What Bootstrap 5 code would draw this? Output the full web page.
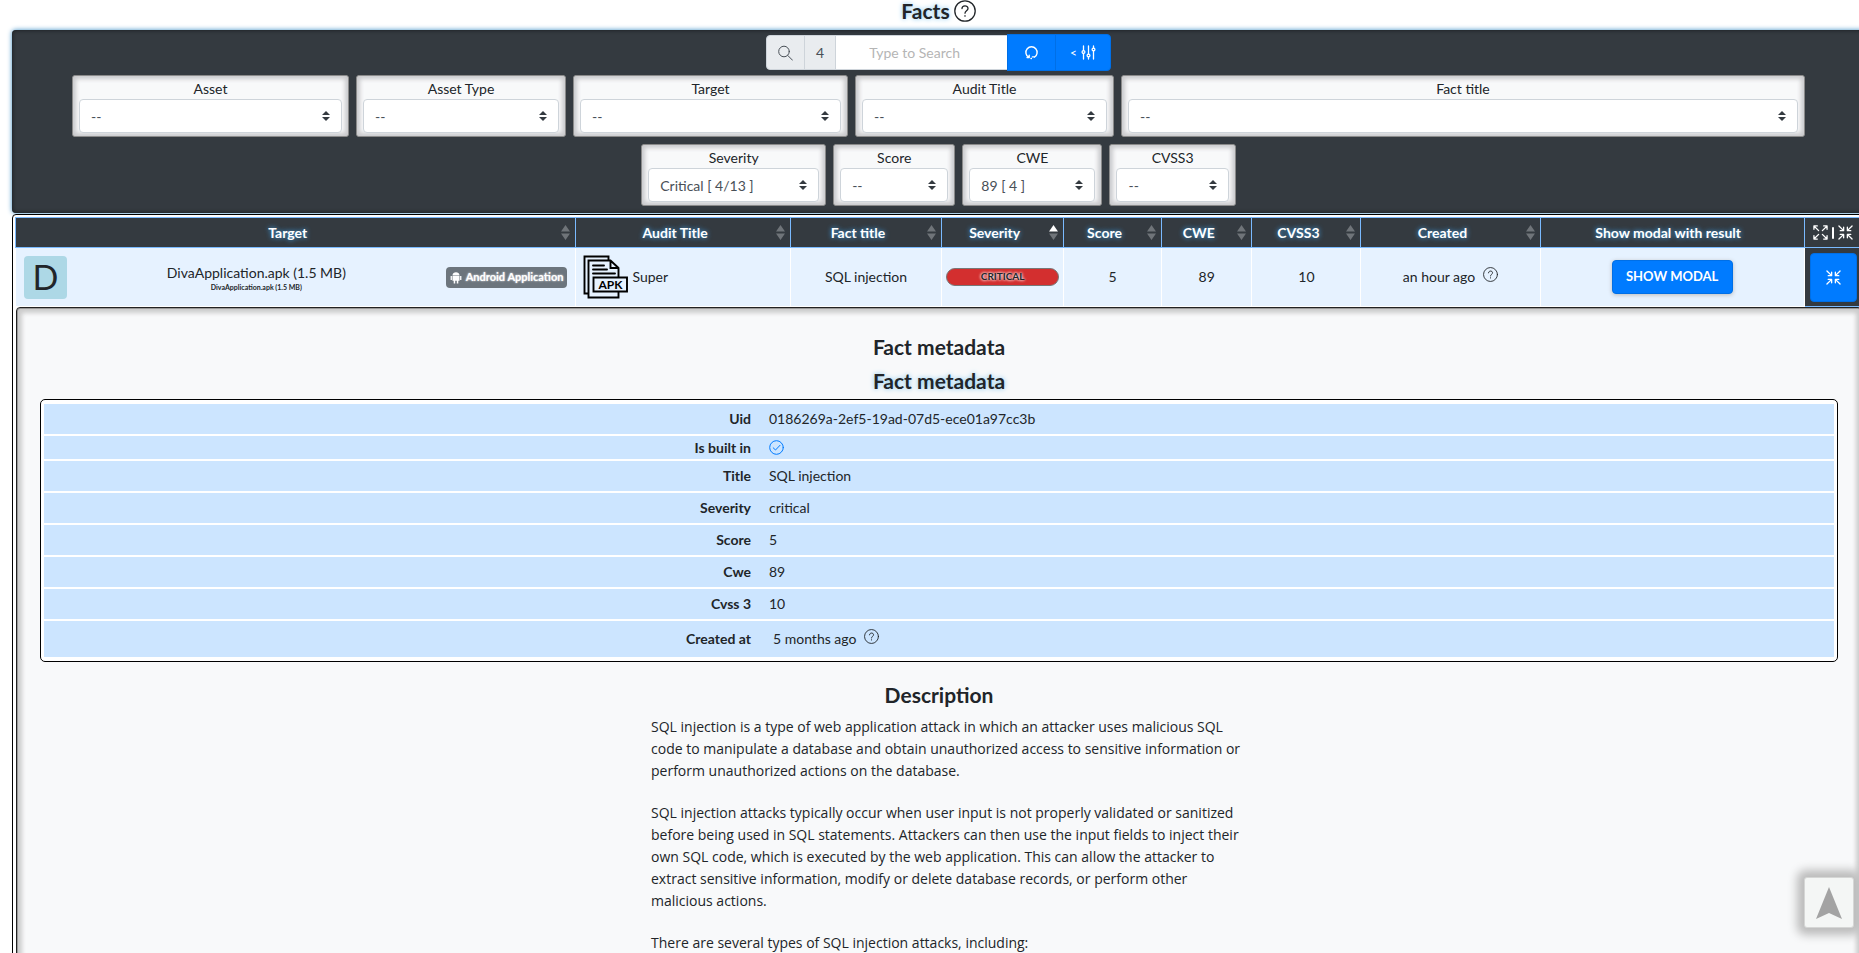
<!DOCTYPE html>
<html lang="en">
<head>
<meta charset="utf-8">
<meta name="viewport" content="width=device-width, initial-scale=1">
<title>Facts</title>
<link href="https://cdn.jsdelivr.net/npm/bootstrap@5.3.0/dist/css/bootstrap.min.css" rel="stylesheet">
<style>
  :root { --edge: #7abaff; --dark: #343a40; --blue: #007bff; }
  body { font-family: Lato, "Liberation Sans", sans-serif; font-size: 14px; line-height: 20px; color: #212529; overflow-x: hidden; }
  svg { display: block; fill: none; stroke: currentColor; stroke-linecap: round; stroke-linejoin: round; }
  .page-body { margin: 0 -6px 0 12px; }
  .page-title { font-size: 21px; line-height: 22px; }
  .glow { text-shadow: 0 0 5px #7cc4ee; }
  .btn-main { background: var(--blue); color: #fff; border: 1px solid #006fe6; border-radius: 4px; }
  .btn-main:hover { background: #0069d9; color: #fff; }

  /* filter panel */
  .filters { background: var(--dark); border-radius: 4px; padding: 4px 60px 7px; box-shadow: 0 0 5px #3c8dc5, inset 0 0 4px #16191c; }
  .search-bar { width: 345px; height: 37px; margin-bottom: 4px; }
  .search-bar .input-group-text { height: 35px; padding: 0 11px; font-size: 14px; color: #495057; background: #e9ecef; border: 1px solid #ced4da; border-radius: 4px 0 0 4px; }
  .search-bar .form-control { height: 35px; font-size: 14px; border-color: #ced4da; border-radius: 0; padding: 0 26px 0 12px; text-align: center; }
  .search-bar .form-control::placeholder { color: #b5b5b5; }
  .search-bar .btn { height: 37px; font-size: 12px; padding: 0 16px; }
  .search-bar .btn:last-child { padding: 0 14px; }
  .filter-line { display: grid; column-gap: 7px; margin-bottom: 7px; }
  .line-wide { grid-template-columns: 277fr 210fr 275fr 259fr 684fr; }
  .line-short { grid-template-columns: 186fr 123fr 141fr 127fr; width: 34.3%; margin: 0 auto; }
  .filter-box { background: #f8f9fa; border: 1px solid #8a8a8a; border-radius: 3px; padding: 3px 6px; text-align: center; box-shadow: inset 0 0 4px 3px #c9c9cc; }
  .filter-box label { display: block; line-height: 20px; }
  .filter-box .form-select { height: 34px; font-size: 14px; color: #495057; border-color: #ced4da; border-radius: 4px; padding: 0 24px 0 11px;
    background: #fff url("data:image/svg+xml,%3csvg xmlns='http://www.w3.org/2000/svg' viewBox='0 0 4 5'%3e%3cpath fill='%23343a40' d='M2 0L0 2h4zm0 5L0 3h4z'/%3e%3c/svg%3e") no-repeat right 11px center/8px 10px; }

  /* result table */
  .results { border: 1px solid #000; border-radius: 4px; padding: 2px; margin-top: 1px; background: #fff; }
  .fact-table { width: 100%; table-layout: fixed; border-collapse: separate; border-spacing: 0; }
  .fact-table > thead th { height: 31px; background: var(--dark); color: #fff; text-align: center; text-shadow: 0 0 5px #3fa9f5; border: 1px solid var(--edge); border-left: 0; padding: 0 21px 0 5px; position: relative; }
  .fact-table > thead th:first-child { border-left: 1px solid var(--edge); }
  .fact-table > thead th.no-sort { padding: 0 12px 0 4px; }
  .fact-table > thead th.all-toggle { padding: 0 4px; }
  .sorter { position: absolute; right: 5px; top: 7px; width: 9px; height: 15px; stroke: none; fill: #6f7479; }
  .sorter .on { fill: #fff; }
  .fact-row > td { height: 59px; background: #e6f2ff; border-right: 1px solid #fff; border-bottom: 1px solid #fff; text-align: center; vertical-align: middle; padding: 0 7px; }
  .fact-row > td:first-child { border-left: 1px solid #fff; padding: 0 8px; }
  .fact-row > td.toggle-cell { background: var(--dark); border-right: 0; border-bottom-color: var(--edge); padding: 0 4px; }
  .avatar { width: 43px; height: 43px; border-radius: 4px; background: #add8e6; font-size: 34px; line-height: 42px; }
  .tiny { font-size: 7px; line-height: 9px; font-weight: 700; }
  .kind { background: #6c757d; color: #fff; border-radius: 4px; height: 21px; padding: 0 4px; font-size: 11px; font-weight: 700; text-shadow: 0 0 2px #fff; }
  .apk-icon { stroke: #000; stroke-linejoin: miter; }
  .severity { background: #d32f2f; border: 1px solid #777; border-radius: 9px; height: 18px; line-height: 15px; margin: 0 -3px; font-size: 10px; font-weight: 700; text-shadow: 0 0 3px #fff, 0 0 3px #fff; }
  .btn-modal { height: 34px; width: 121px; padding: 0; font-size: 13px; font-weight: 700; box-shadow: 0 1px 4px #bbb; }
  .btn-toggle { height: 49px; width: 47px; padding: 0; }

  /* expanded details */
  .detail { border: 1px solid #222; border-radius: 4px; background: #f8f9fa; margin-left: 1px; padding: 26px 23px 0; box-shadow: inset 0 0 0 1px #999, inset 0 0 4px 5px #ccc; }
  .detail h2 { font-size: 21px; line-height: 26px; font-weight: 700; text-align: center; margin: 0 0 8px; }
  .meta { border: 1px solid #000; border-radius: 5px; background: #fff; padding: 2px 3px; margin-top: -3px; margin-bottom: 20px; }
  .meta table { width: 100%; border-collapse: separate; border-spacing: 0 2px; }
  .meta th, .meta td { background: #cce5ff; height: 30px; padding: 0 9px; }
  .meta th { width: 40%; text-align: right; }
  .meta tr.slim > * { height: 23px; }
  .meta tr.tall > * { height: 36px; }
  .check { stroke: var(--blue); }
  .prose { width: 576px; max-width: 100%; margin: 0 auto; font-family: "Open Sans", "Noto Sans", sans-serif; line-height: 22px; white-space: nowrap; }
  .prose p { margin-bottom: 20px; }

  .to-top { position: fixed; right: 5px; bottom: 25px; width: 50px; height: 51px; padding: 0; background: #f4f6f5; border: 1px solid #d5d6d5; border-radius: 3px; color: #a3a3a3; box-shadow: 0 0 10px 7px #bbb; }
</style>
</head>
<body>
<svg width="0" height="0" class="position-absolute" aria-hidden="true">
  <symbol id="question" viewBox="0 0 22 22"><circle cx="11" cy="11" r="10.2"/><path d="M8 8.6C8 4.9 14 4.9 14 8.5 14 10.8 11 10.7 11 13.2M11 15.7v.5"/></symbol>
  <symbol id="compress" viewBox="0 0 16 16"><path d="M1 1l5 5M6 2.400V6H2.400M15 1l-5 5M10 2.400V6h3.600M1 15l5-5M2.400 10H6v3.600M15 15l-5-5M13.600 10H10v3.600"/></symbol>
  <symbol id="expand" viewBox="0 0 16 16"><path d="M6 6L1 1M1 4.600V1h3.600M10 6l5-5M11.400 1H15v3.600M6 10l-5 5M1 11.400V15h3.600M10 10l5 5M15 11.400V15h-3.600"/></symbol>
  <symbol id="sort" viewBox="0 0 9 15"><path d="M4.500 0L9 6.500H0zM4.500 15L0 8.500h9z"/></symbol>
</svg>

<main class="page-body">
  <h1 class="page-title d-flex justify-content-center align-items-center gap-1 fw-bold mb-2">
    <span class="glow">Facts</span>
    <svg width="22" height="22" stroke-width="1.3"><use href="#question"/></svg>
  </h1>

  <form class="filters">
    <div class="search-bar input-group flex-nowrap align-items-center mx-auto">
      <label class="input-group-text" for="q" aria-label="Search"><svg width="15" height="16" viewBox="0 0 15 16" stroke-width="1"><circle cx="6" cy="6.500" r="5.300"/><path d="M9.800 10.500l4.700 4.700"/></svg></label>
      <span class="input-group-text">4</span>
      <input id="q" class="form-control" type="text" placeholder="Type to Search">
      <button class="btn btn-main" type="button" aria-label="Reload"><svg width="15" height="15" viewBox="0 0 15 15" stroke-width="1.400"><path d="M4.600 12.200A5.600 5.600 0 1 1 10.400 12.200M3 12.600h2.200v-2.400M8.400 11.900h2.200M7 13.500h.4"/></svg></button>
      <button class="btn btn-main d-flex align-items-center justify-content-center gap-1" type="button" aria-label="Toggle filters"><span>&lt;</span><svg width="15" height="15" viewBox="0 0 15 15" stroke-width="1.300"><path d="M2.500 1v4.500M2.500 8.500V14M7.500 1v8M7.500 12v2M12.500 1v2M12.500 6v8"/><circle cx="2.500" cy="7" r="1.400"/><circle cx="7.500" cy="10.500" r="1.400"/><circle cx="12.500" cy="4.500" r="1.400"/></svg></button>
    </div>
    <div class="filter-line line-wide">
      <div class="filter-box"><label for="f1">Asset</label><select id="f1" class="form-select"><option>--</option></select></div>
      <div class="filter-box"><label for="f2">Asset Type</label><select id="f2" class="form-select"><option>--</option></select></div>
      <div class="filter-box"><label for="f3">Target</label><select id="f3" class="form-select"><option>--</option></select></div>
      <div class="filter-box"><label for="f4">Audit Title</label><select id="f4" class="form-select"><option>--</option></select></div>
      <div class="filter-box"><label for="f5">Fact title</label><select id="f5" class="form-select"><option>--</option></select></div>
    </div>
    <div class="filter-line line-short">
      <div class="filter-box"><label for="f6">Severity</label><select id="f6" class="form-select"><option>Critical [ 4/13 ]</option></select></div>
      <div class="filter-box"><label for="f7">Score</label><select id="f7" class="form-select"><option>--</option></select></div>
      <div class="filter-box"><label for="f8">CWE</label><select id="f8" class="form-select"><option>89 [ 4 ]</option></select></div>
      <div class="filter-box"><label for="f9">CVSS3</label><select id="f9" class="form-select"><option>--</option></select></div>
    </div>
  </form>

  <section class="results">
    <table class="fact-table">
      <colgroup>
        <col style="width:30.4%"><col style="width:11.6%"><col style="width:8.2%"><col style="width:6.6%"><col style="width:5.3%"><col style="width:4.9%"><col style="width:5.9%"><col style="width:9.7%"><col style="width:14.3%"><col style="width:3.1%">
      </colgroup>
      <thead>
        <tr>
          <th>Target<svg class="sorter"><use href="#sort"/></svg></th>
          <th>Audit Title<svg class="sorter"><use href="#sort"/></svg></th>
          <th>Fact title<svg class="sorter"><use href="#sort"/></svg></th>
          <th>Severity<svg class="sorter" viewBox="0 0 9 15"><path class="on" d="M4.500 0L9 6.500H0z"/><path d="M4.500 15L0 8.500h9z"/></svg></th>
          <th>Score<svg class="sorter"><use href="#sort"/></svg></th>
          <th>CWE<svg class="sorter"><use href="#sort"/></svg></th>
          <th>CVSS3<svg class="sorter"><use href="#sort"/></svg></th>
          <th>Created<svg class="sorter"><use href="#sort"/></svg></th>
          <th class="no-sort">Show modal with result</th>
          <th class="all-toggle"><span class="d-flex align-items-center justify-content-center gap-1"><svg width="15" height="15" stroke-width="1.400"><use href="#expand"/></svg><svg width="2" height="12" viewBox="0 0 2 12" stroke-width="2"><path d="M1 1v10"/></svg><svg width="15" height="15" stroke-width="1.400"><use href="#compress"/></svg></span></th>
        </tr>
      </thead>
      <tbody>
        <tr class="fact-row">
          <td>
            <div class="d-flex align-items-center justify-content-between">
              <div class="avatar">D</div>
              <div><div>DivaApplication.apk (1.5 MB)</div><div class="tiny">DivaApplication.apk (1.5 MB)</div></div>
              <span class="kind d-flex align-items-center gap-1"><svg width="12" height="13" viewBox="0 0 12 13"><path fill="#fff" stroke="none" d="M2.500 4.200C2.500.3 9.500.3 9.500 4.200zM2.500 4.800h7v5h-1.200v2.600H6.800V9.800H5.200v2.600H3.700V9.800H2.500zM.6 5h1.300v4H.6zM10.100 5h1.300v4h-1.300z"/></svg>Android Application</span>
            </div>
          </td>
          <td>
            <div class="d-flex align-items-center gap-1">
              <svg class="apk-icon" width="45" height="44" viewBox="0 0 45 44" stroke-width="1.900"><path d="M5.500 38.500H1.500V1.500H25.500V5.500M35.500 22V13L27.500 5.500H5.500V42.500H35.500V37M27.500 5.500V13H35.500M10 10.500H21M10 14.500H24M10 18.500H32"/><path fill="#e6f2ff" d="M10.500 22.500H44V36.500H10.500z"/><text x="27.500" y="34" text-anchor="middle" font-family="Lato, sans-serif" font-size="12" font-weight="700" fill="#000" stroke="none">APK</text></svg>
              <span>Super</span>
            </div>
          </td>
          <td>SQL injection</td>
          <td><div class="severity">CRITICAL</div></td>
          <td>5</td>
          <td>89</td>
          <td>10</td>
          <td><span class="d-flex justify-content-center gap-2">an hour ago <svg width="15" height="15" stroke-width="1.300"><use href="#question"/></svg></span></td>
          <td><button class="btn btn-main btn-modal" type="button">SHOW MODAL</button></td>
          <td class="toggle-cell"><button class="btn btn-main btn-toggle" type="button" aria-label="Collapse"><svg class="mx-auto" width="15" height="15" stroke-width="1.400"><use href="#compress"/></svg></button></td>
        </tr>
        <tr>
          <td colspan="10" class="p-0">
            <div class="detail">
              <h2>Fact metadata</h2>
              <h2 class="glow">Fact metadata</h2>
              <div class="meta">
                <table>
                  <tr><th scope="row">Uid</th><td>0186269a-2ef5-19ad-07d5-ece01a97cc3b</td></tr>
                  <tr class="slim"><th scope="row">Is built in</th><td><svg class="check" width="15" height="15" viewBox="0 0 15 15"><circle cx="7.500" cy="7.500" r="6.800"/><path d="M4.200 7.800l2.300 2.200 4.500-4.700"/></svg></td></tr>
                  <tr><th scope="row">Title</th><td>SQL injection</td></tr>
                  <tr><th scope="row">Severity</th><td>critical</td></tr>
                  <tr><th scope="row">Score</th><td>5</td></tr>
                  <tr><th scope="row">Cwe</th><td>89</td></tr>
                  <tr><th scope="row">Cvss 3</th><td>10</td></tr>
                  <tr class="tall"><th scope="row">Created at</th><td><span class="d-flex gap-2 ps-1">5 months ago <svg width="15" height="15" stroke-width="1.300"><use href="#question"/></svg></span></td></tr>
                </table>
              </div>
              <h2>Description</h2>
              <div class="prose">
                <p>SQL injection is a type of web application attack in which an attacker uses malicious SQL<br>code to manipulate a database and obtain unauthorized access to sensitive information or<br>perform unauthorized actions on the database.</p>
                <p>SQL injection attacks typically occur when user input is not properly validated or sanitized<br>before being used in SQL statements. Attackers can then use the input fields to inject their<br>own SQL code, which is executed by the web application. This can allow the attacker to<br>extract sensitive information, modify or delete database records, or perform other<br>malicious actions.</p>
                <p>There are several types of SQL injection attacks, including:</p>
              </div>
            </div>
          </td>
        </tr>
      </tbody>
    </table>
  </section>
</main>

<button class="to-top btn" type="button" aria-label="Back to top"><svg class="mx-auto" width="26" height="32" viewBox="0 0 26 32"><path fill="#a3a3a3" stroke="none" d="M13 0L26 32 13 26 0 32z"/></svg></button>
<script src="https://cdn.jsdelivr.net/npm/bootstrap@5.3.0/dist/js/bootstrap.bundle.min.js"></script>
</body>
</html>
